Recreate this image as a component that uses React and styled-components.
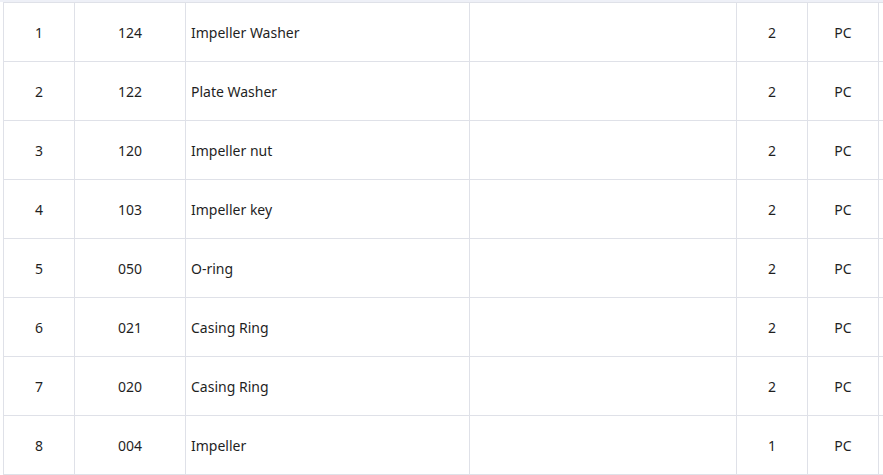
import React from 'react'
import styled, { createGlobalStyle } from 'styled-components'

const GlobalStyle = createGlobalStyle`
  html, body {
    margin: 0;
    padding: 0;
    background: #fff;
    overflow: hidden;
  }
  body {
    font-family: "Noto Sans", "Liberation Sans", sans-serif;
  }
`

const Page = styled.div`
  width: 883px;
  height: 475px;
  overflow: hidden;
`

const HeaderEdge = styled.div`
  height: 2px;
  background: #eef0f7;
`

const TableWrap = styled.div`
  padding-left: 3px;
`

const Table = styled.table`
  border-collapse: collapse;
  table-layout: fixed;
  width: 900px;
  font-size: 14px;
  color: #1f1f1f;
`

const Row = styled.tr`
  height: 59px;
`

const Cell = styled.td`
  border: 1px solid #dfe1e8;
  padding: 0 5px;
  text-align: ${p => (p.$left ? 'left' : 'center')};
  vertical-align: middle;
  white-space: nowrap;
  overflow: hidden;
`

const cols = [71, 111, 284, 267, 71, 71, 25]

const rows = [
  ['1', '124', 'Impeller Washer', '2'],
  ['2', '122', 'Plate Washer', '2'],
  ['3', '120', 'Impeller nut', '2'],
  ['4', '103', 'Impeller key', '2'],
  ['5', '050', 'O-ring', '2'],
  ['6', '021', 'Casing Ring', '2'],
  ['7', '020', 'Casing Ring', '2'],
  ['8', '004', 'Impeller', '1'],
]

export default function App() {
  return (
    <Page>
      <GlobalStyle />
      <HeaderEdge />
      <TableWrap>
        <Table>
          <colgroup>
            {cols.map((w, i) => (
              <col key={i} style={{ width: w }} />
            ))}
          </colgroup>
          <tbody>
            {rows.map(r => (
              <Row key={r[0]}>
                <Cell>{r[0]}</Cell>
                <Cell>{r[1]}</Cell>
                <Cell $left>{r[2]}</Cell>
                <Cell />
                <Cell>{r[3]}</Cell>
                <Cell>PC</Cell>
                <Cell />
              </Row>
            ))}
          </tbody>
        </Table>
      </TableWrap>
    </Page>
  )
}
